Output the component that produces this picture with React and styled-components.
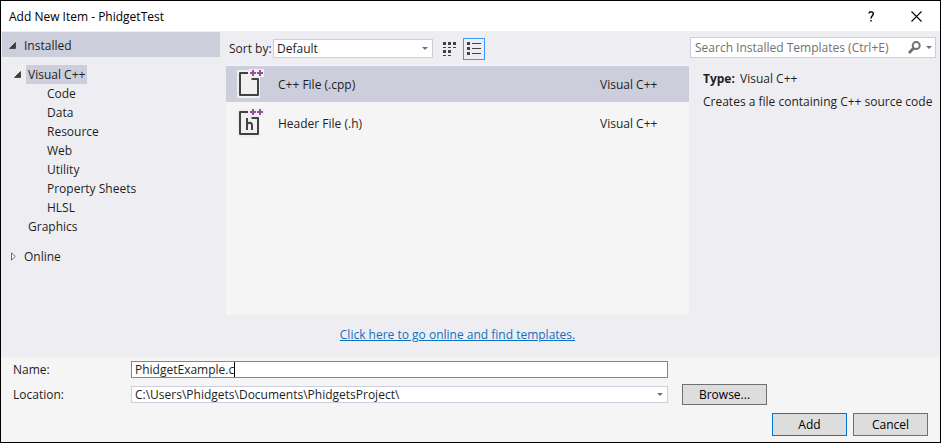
import React, { useState } from 'react'
import styled, { createGlobalStyle, ThemeProvider } from 'styled-components'

const theme = {
  colors: {
    text: '#1e1e1e',
    muted: '#717171',
    window: '#ffffff',
    body: '#eeeef2',
    panel: '#f5f5f5',
    selected: '#cccedb',
    accent: '#3399ff',
    link: '#0e70c0',
    button: '#dddddd',
    buttonBorder: '#707070',
    icon: '#424242',
    plus: '#9b4f96',
  },
  font: "'Open Sans', 'Noto Sans', sans-serif",
}

const GlobalStyle = createGlobalStyle`
  * {
    box-sizing: border-box;
  }

  body {
    margin: 0;
  }

  body, button, input, select {
    font-family: ${theme.font};
    font-size: 12px;
    line-height: 19px;
    color: ${theme.colors.text};
  }
`

const Dialog = styled.div`
  display: flex;
  flex-direction: column;
  min-height: 100vh;
  border: 1px solid #000;
  background-color: ${({ theme }) => theme.colors.body};
`

const TitleBar = styled.header`
  display: flex;
  align-items: center;
  justify-content: space-between;
  height: 30px;
  padding: 0 15px 0 8px;
  background-color: ${({ theme }) => theme.colors.window};
`

const Title = styled.h1`
  margin: 0;
  font-size: 12px;
  font-weight: 400;
  color: #000;
`

const WindowButtons = styled.div`
  display: flex;
  gap: 28px;
`

const WindowButton = styled.button`
  display: flex;
  align-items: center;
  justify-content: center;
  width: 17px;
  height: 20px;
  padding: 0;
  border: none;
  background: none;
`

const Main = styled.main`
  display: flex;
  flex: 1;
  padding: 1px 4px 0 1px;
`

const Sidebar = styled.nav`
  width: 218px;
  margin-right: 6px;
`

const SectionButton = styled.button`
  display: flex;
  align-items: center;
  gap: 8px;
  width: 100%;
  height: 25px;
  padding: 2px 7px 0;
  border: none;
  background-color: ${({ theme, $active }) => ($active ? theme.colors.selected : 'transparent')};
`

const Tree = styled.ul`
  margin: 0;
  padding: 8px 0 7px 12px;
  list-style: none;
`

const Branch = styled.ul`
  margin: 0;
  padding: 0 0 0 31px;
  list-style: none;
`

const TreeRow = styled.div`
  display: flex;
  align-items: center;
  gap: 5px;
  height: 19px;
`

const Arrow = styled.svg`
  flex: none;
  width: 7px;
  height: 9px;
`

const ArrowSpace = styled.span`
  width: 7px;
`

const TreeLabel = styled.span`
  padding: 1px 2px 0;
  line-height: 18px;
  background-color: ${({ theme, $selected }) => ($selected ? theme.colors.selected : 'transparent')};
`

const Center = styled.section`
  display: flex;
  flex: 1;
  flex-direction: column;
  margin-right: 1px;
`

const Toolbar = styled.div`
  display: flex;
  align-items: center;
  height: 33px;
  padding: 0 3px;
`

const SortLabel = styled.label`
  width: 44px;
  white-space: nowrap;
`

const Combo = styled.div`
  display: grid;
  grid-template-columns: 1fr 14px;
  align-items: center;
  width: ${({ $width }) => $width || 'auto'};
  border: 1px solid ${({ theme }) => theme.colors.selected};
  background-color: ${({ theme }) => theme.colors.window};
`

const Select = styled.select`
  grid-area: 1 / 1 / 2 / 3;
  height: ${({ $height }) => $height};
  padding: 0 14px 0 3px;
  border: none;
  outline: none;
  appearance: none;
  background: none;
  line-height: 15px;
`

const DropArrow = styled.svg`
  grid-area: 1 / 2;
  width: 6px;
  height: 3px;
  justify-self: center;
  pointer-events: none;
`

const ViewButtons = styled.div`
  display: flex;
  gap: 2px;
  margin-left: 6px;
`

const ViewButton = styled.button`
  display: flex;
  align-items: center;
  justify-content: center;
  width: 22px;
  height: 22px;
  padding: 0;
  border: 1px solid ${({ theme, $active }) => ($active ? theme.colors.accent : 'transparent')};
  background: none;
`

const TemplateList = styled.ul`
  display: flex;
  flex: 1;
  flex-direction: column;
  gap: 3px;
  margin: 0;
  padding: 1px 0;
  list-style: none;
  background-color: ${({ theme }) => theme.colors.panel};
`

const TemplateRow = styled.li`
  display: grid;
  grid-template-columns: 42px 1fr 89px;
  align-items: center;
  height: 36px;
  padding-left: 10px;
  background-color: ${({ theme, $selected }) => ($selected ? theme.colors.selected : 'transparent')};
`

const LinkRow = styled.div`
  display: flex;
  align-items: center;
  justify-content: center;
  height: 42px;
  padding-bottom: 3px;
`

const Link = styled.a`
  color: ${({ theme }) => theme.colors.link};
`

const Details = styled.aside`
  width: 246px;
  padding-top: 5px;
`

const SearchBox = styled.div`
  display: flex;
  align-items: center;
  height: 21px;
  padding-right: 3px;
  border: 1px solid ${({ theme }) => theme.colors.selected};
  background-color: ${({ theme }) => theme.colors.window};
`

const SearchInput = styled.input`
  flex: 1;
  min-width: 0;
  padding: 0 4px;
  border: none;
  outline: none;
  background: none;

  &::placeholder {
    color: ${({ theme }) => theme.colors.muted};
    opacity: 1;
  }
`

const SearchButton = styled.button`
  display: flex;
  align-items: center;
  gap: 5px;
  padding: 0;
  border: none;
  background: none;
`

const Description = styled.div`
  display: flex;
  flex-direction: column;
  gap: 4px;
  padding: 11px 0 0 13px;

  p {
    margin: 0;
    white-space: nowrap;
  }

  b {
    margin-right: 2px;
  }
`

const Footer = styled.footer`
  padding: 4px 12px 6px;
  background-color: ${({ theme }) => theme.colors.panel};
`

const Fields = styled.div`
  display: grid;
  grid-template-columns: 118px 1fr 85px;
  grid-template-rows: 17px 21px;
  row-gap: 6px;
  align-items: center;
  padding: 0 161px 8px 0;
`

const NameField = styled.div`
  display: flex;
  height: 17px;
  margin-right: 14px;
  border: 1px solid ${({ theme }) => theme.colors.accent};
  background-color: ${({ theme }) => theme.colors.window};
`

const NameInput = styled.input`
  field-sizing: content;
  height: 15px;
  padding: 0 0 0 3px;
  border: none;
  outline: none;
  background: none;
  line-height: 15px;
  caret-color: transparent;
`

const Caret = styled.span`
  width: 1px;
  background-color: #000;
`

const LocationField = styled.div`
  margin-right: 14px;
`

const Button = styled.button`
  width: ${({ $wide }) => ($wide ? '85px' : '75px')};
  height: ${({ $wide }) => ($wide ? '21px' : '23px')};
  padding: 0;
  border: 1px solid ${({ theme, $primary }) => ($primary ? '#0078d7' : theme.colors.buttonBorder)};
  background-color: ${({ theme }) => theme.colors.button};
  color: #000;
  line-height: 18px;
`

const Actions = styled.div`
  display: flex;
  justify-content: flex-end;
  gap: 6px;
`

const languages = ['Code', 'Data', 'Resource', 'Web', 'Utility', 'Property Sheets', 'HLSL']

const templates = [
  { id: 'cpp', name: 'C++ File (.cpp)', type: 'Visual C++' },
  { id: 'h', name: 'Header File (.h)', type: 'Visual C++' },
]

const OpenArrow = () => (
  <Arrow viewBox="0 0 7 9">
    <path d="M6.5 1.5v6h-6z" fill="#3c3c3c" stroke="#1e1e1e" strokeWidth="0.6" />
  </Arrow>
)

const ClosedArrow = () => (
  <Arrow viewBox="0 0 7 9">
    <path d="M2.5 0.9v7.2L6.3 4.5z" fill="#fff" stroke="#6a6a6a" />
  </Arrow>
)

const Drop = () => (
  <DropArrow viewBox="0 0 6 3">
    <path d="M0 0h6L3 3z" fill={theme.colors.muted} />
  </DropArrow>
)

const FileIcon = ({ header }) => (
  <svg width="28" height="30" viewBox="0 0 28 30">
    <path
      d="M2 1h11V0h15v8h-4v20l-1 1H2l-1-1V2z"
      fill="#f0eff1"
    />
    <path
      d="M12 4H4v22h18V10h-6.5"
      fill="none"
      stroke={theme.colors.icon}
      strokeWidth="2"
      strokeLinejoin="round"
    />
    {header && (
      <path d="M11 10v12M11 16.5c0.5-2.2 5-2.8 5 0.7V22" fill="none" stroke={theme.colors.icon} strokeWidth="2" />
    )}
    <path d="M14 4h6M17 1v6M21 4h6M24 1v6" fill="none" stroke={theme.colors.plus} strokeWidth="2" />
  </svg>
)

const TilesIcon = () => (
  <svg width="14" height="14" viewBox="0 0 14 14" fill={theme.colors.icon}>
    <path d="M0 0h3v3H0zM5 0h3v3H5zM10 0h3v3h-3zM0 5h3v1H0zM5 5h3v1H5zM10 5h3v1h-3zM0 8h3v3H0zM5 8h3v3H5zM0 13h3v1H0zM5 13h3v1H5z" />
  </svg>
)

const ListIcon = () => (
  <svg width="14" height="14" viewBox="0 0 14 14" fill={theme.colors.icon}>
    <path d="M0 0h3v3H0zM5 1h9v1H5zM0 5h3v3H0zM5 6h9v1H5zM0 10h3v3H0zM5 11h9v1H5z" />
  </svg>
)

const SearchIcon = () => (
  <svg width="13" height="13" viewBox="0 0 13 13" fill="none" stroke={theme.colors.muted}>
    <circle cx="8.2" cy="4.6" r="3.5" strokeWidth="2" />
    <path d="M5.5 7.2L1 12" strokeWidth="2.8" />
  </svg>
)

const App = () => {
  const [selected, setSelected] = useState('cpp')
  const [name, setName] = useState('PhidgetExample.c')
  const [view, setView] = useState('list')

  return (
    <ThemeProvider theme={theme}>
      <GlobalStyle />
      <Dialog role="dialog" aria-labelledby="dialog-title">
        <TitleBar>
          <Title id="dialog-title">Add New Item - PhidgetTest</Title>
          <WindowButtons>
            <WindowButton aria-label="Help">
              <svg width="7" height="11" viewBox="0 0 7 11" fill="none" stroke="#000" strokeWidth="1.4">
                <path d="M1 2.5C1.2 0.2 5.5 0.2 5.3 2.9C5.2 4.7 3 4.8 3 7.5M3 9v1.6" />
              </svg>
            </WindowButton>
            <WindowButton aria-label="Close">
              <svg width="11" height="11" viewBox="0 0 11 11" stroke="#000" strokeWidth="1.1">
                <path d="M0.5 0.5l10 10M10.5 0.5l-10 10" />
              </svg>
            </WindowButton>
          </WindowButtons>
        </TitleBar>

        <Main>
          <Sidebar>
            <SectionButton $active>
              <OpenArrow />
              Installed
            </SectionButton>
            <Tree>
              <li>
                <TreeRow>
                  <OpenArrow />
                  <TreeLabel $selected>Visual C++</TreeLabel>
                </TreeRow>
                <Branch>
                  {languages.map((item) => (
                    <li key={item}>
                      <TreeRow>
                        <TreeLabel>{item}</TreeLabel>
                      </TreeRow>
                    </li>
                  ))}
                </Branch>
              </li>
              <li>
                <TreeRow>
                  <ArrowSpace />
                  <TreeLabel>Graphics</TreeLabel>
                </TreeRow>
              </li>
            </Tree>
            <SectionButton>
              <ClosedArrow />
              Online
            </SectionButton>
          </Sidebar>

          <Center>
            <Toolbar>
              <SortLabel htmlFor="sort">Sort by:</SortLabel>
              <Combo $width="160px">
                <Select id="sort" $height="17px">
                  <option>Default</option>
                </Select>
                <Drop />
              </Combo>
              <ViewButtons>
                <ViewButton aria-label="Small icons" $active={view === 'tiles'} onClick={() => setView('tiles')}>
                  <TilesIcon />
                </ViewButton>
                <ViewButton aria-label="List" $active={view === 'list'} onClick={() => setView('list')}>
                  <ListIcon />
                </ViewButton>
              </ViewButtons>
            </Toolbar>
            <TemplateList>
              {templates.map(({ id, name, type }) => (
                <TemplateRow key={id} $selected={selected === id} onClick={() => setSelected(id)}>
                  <FileIcon header={id === 'h'} />
                  <span>{name}</span>
                  <span>{type}</span>
                </TemplateRow>
              ))}
            </TemplateList>
            <LinkRow>
              <Link href="#online">Click here to go online and find templates.</Link>
            </LinkRow>
          </Center>

          <Details>
            <SearchBox>
              <SearchInput aria-label="Search" placeholder="Search Installed Templates (Ctrl+E)" />
              <SearchButton aria-label="Search options">
                <SearchIcon />
                <Drop />
              </SearchButton>
            </SearchBox>
            <Description>
              <p>
                <b>Type:</b> Visual C++
              </p>
              <p>Creates a file containing C++ source code</p>
            </Description>
          </Details>
        </Main>

        <Footer>
          <Fields>
            <label htmlFor="name">Name:</label>
            <NameField>
              <NameInput id="name" value={name} onChange={(event) => setName(event.target.value)} />
              <Caret />
            </NameField>
            <span />
            <label htmlFor="location">Location:</label>
            <LocationField>
              <Combo>
                <Select id="location" $height="15px">
                  <option>C:\Users\Phidgets\Documents\PhidgetsProject\</option>
                </Select>
                <Drop />
              </Combo>
            </LocationField>
            <Button $wide>Browse...</Button>
          </Fields>
          <Actions>
            <Button $primary>Add</Button>
            <Button>Cancel</Button>
          </Actions>
        </Footer>
      </Dialog>
    </ThemeProvider>
  )
}

export default App
